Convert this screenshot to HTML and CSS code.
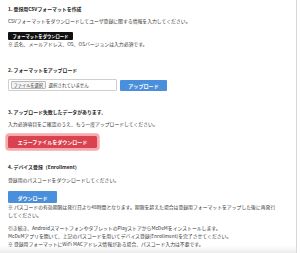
FILE: index.html
```html
<!DOCTYPE html>
<html lang="ja">
<head>
<meta charset="utf-8">
<link rel="stylesheet" href="styles.css">
</head>
<body>
<div class="page">
  <section class="sec sec1">
    <h2 class="title">1. 登録用CSVフォーマットを作成</h2>
    <p class="text lead">CSVフォーマットをダウンロードしてユーザ登録に関する情報を入力してください。</p>
    <div class="btn btn-black">フォーマットをダウンロード</div>
    <p class="text">※ 氏名、メールアドレス、OS、OSバージョンは入力必須です。</p>
  </section>

  <section class="sec sec2">
    <h2 class="title">2. フォーマットをアップロード</h2>
    <div class="file-row">
      <div class="file-input">
        <span class="file-btn">ファイルを選択</span>
        <span class="file-name">選択されていません</span>
      </div>
      <div class="btn btn-blue btn-upload">アップロード</div>
    </div>
  </section>

  <section class="sec sec3">
    <h2 class="title">3. アップロード失敗したデータがあります。</h2>
    <p class="text lead">入力必須項目をご確認のうえ、もう一度アップロードしてください。</p>
    <div class="btn btn-red">エラーファイルをダウンロード</div>
  </section>

  <section class="sec sec4">
    <h2 class="title">4. デバイス登録（Enrollment）</h2>
    <p class="text lead">登録用のパスコードをダウンロードしてください。</p>
    <div class="btn btn-blue btn-dl">ダウンロード</div>
    <p class="text">※ パスコードの有効期限は発行日より48時間となります。期限を超えた場合は登録用フォーマットをアップした後に再発行してください。</p>
    <p class="text outro">引き続き、AndroidスマートフォンやタブレットのPlayストアからMcDeMをインストールします。<br>McDeMアプリを開いて、上記のパスコードを用いてデバイス登録(Enrollment)を完了させてください。<br>※ 登録用フォーマットにWiFi MACアドレス情報がある場合、パスコード入力は不要です。</p>
  </section>
</div>
<div class="bottom-fade"></div>
</body>
</html>
```

FILE: styles.css
```css
html, body {
  margin: 0;
  padding: 0;
  background: #fff;
}

body {
  font-family: "Noto Sans CJK JP", "Noto Sans", sans-serif;
  color: #333;
  width: 300px;
  height: 253px;
  overflow: hidden;
}

.page {
  width: 297px;
  height: 253px;
  box-sizing: border-box;
  border-right: 1px solid #d8d8d8;
  padding: 4.6px 0 0 8px;
}

.sec {
  width: 269px;
  display: flex;
  flex-direction: column;
  align-items: flex-start;
}

.title {
  margin: 0;
  font-size: 4.9px;
  line-height: 7.75px;
  font-weight: 700;
  color: #222;
}

.text {
  margin: 0;
  font-size: 4.85px;
  line-height: 7.75px;
  color: #333;
}

.lead {
  margin-top: 4.4px;
}

.btn {
  display: flex;
  align-items: center;
  justify-content: center;
  color: #fff;
  font-weight: 700;
  box-sizing: border-box;
  white-space: nowrap;
}

.sec1 .btn-black {
  margin-top: 7.3px;
  width: 65px;
  height: 8.2px;
  background: #111;
  border-radius: 1px;
  font-size: 4.3px;
}

.sec2 {
  margin-top: 18.1px;
}

.file-row {
  margin-top: 5.6px;
  display: flex;
  align-items: flex-start;
  gap: 3px;
}

.file-input {
  width: 109px;
  height: 12px;
  box-sizing: border-box;
  border: 1px solid #cfcfcf;
  border-radius: 1px;
  display: flex;
  align-items: center;
  padding-left: 2px;
  gap: 3px;
  background: #fff;
}

.file-btn {
  font-size: 4.2px;
  line-height: 6px;
  padding: 0 1.6px;
  border: 0.5px solid #b9b9b9;
  border-radius: 1px;
  background: #f3f3f3;
  color: #333;
}

.file-name {
  font-size: 4.5px;
  color: #333;
}

.btn-blue {
  background: #4a8fdc;
  border-radius: 1px;
  font-size: 5.1px;
}

.btn-upload {
  margin-top: 1px;
  width: 47px;
  height: 11px;
}

.sec3 {
  margin-top: 17.1px;
}

.btn-red {
  margin-top: 8.1px;
  width: 89px;
  height: 11.5px;
  background: #d9434f;
  border-radius: 1.5px;
  font-size: 5px;
  box-shadow: 0 0 0 2.7px #f7a9ad;
}

.sec4 {
  margin-top: 15.1px;
}

.sec4 .lead {
  margin-top: 5.75px;
}

.btn-dl {
  margin-top: 7.35px;
  width: 49px;
  height: 11.6px;
  font-size: 5px;
}

.outro {
  margin-top: 5.5px;
}

.bottom-fade {
  position: fixed;
  left: 0;
  right: 3px;
  bottom: 0;
  height: 7px;
  background: linear-gradient(to bottom, rgba(230, 230, 230, 0), rgba(220, 220, 220, 0.6));
  pointer-events: none;
}
```
